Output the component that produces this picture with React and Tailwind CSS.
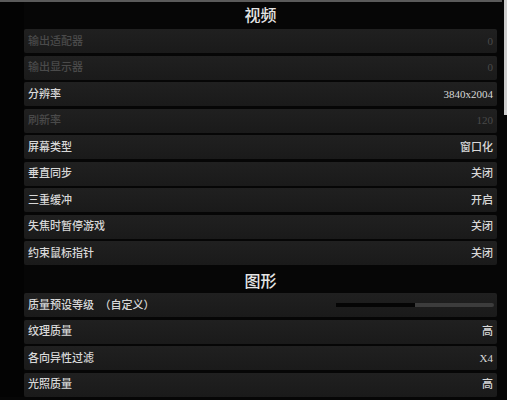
const FONT = {
  fontFamily: '"Liberation Serif", "Noto Sans CJK SC", serif',
};

const videoRows = [
  { label: "输出适配器", value: "0", disabled: true },
  { label: "输出显示器", value: "0", disabled: true },
  { label: "分辨率", value: "3840x2004" },
  { label: "刷新率", value: "120", disabled: true },
  { label: "屏幕类型", value: "窗口化" },
  { label: "垂直同步", value: "关闭" },
  { label: "三重缓冲", value: "开启" },
  { label: "失焦时暂停游戏", value: "关闭" },
  { label: "约束鼠标指针", value: "关闭" },
];

const graphicsRows = [
  { label: "纹理质量", value: "高" },
  { label: "各向异性过滤", value: "X4" },
  { label: "光照质量", value: "高" },
];

function Row({ label, value, disabled, children }) {
  const tone = disabled ? "text-[#4a4a4a]" : "text-[#d8d8d8]";
  return (
    <div className="flex h-[24px] shrink-0 items-center justify-between rounded-[2px] bg-gradient-to-b from-[#202020] to-[#1a1a1a] pl-[4px] pr-[4px]">
      <span className={`text-[11px] font-medium leading-none ${tone}`}>
        {label}
      </span>
      {children ?? (
        <span className={`text-[11px] font-medium leading-none ${tone}`}>
          {value}
        </span>
      )}
    </div>
  );
}

function SectionTitle({ children, className = "" }) {
  return (
    <div
      className={`flex items-center justify-center text-[16px] font-medium leading-none text-[#e4e4e4] ${className}`}
    >
      {children}
    </div>
  );
}

export default function App() {
  return (
    <div
      className="relative h-[400px] w-[507px] overflow-hidden bg-[#060606]"
      style={FONT}
    >
      <div className="h-[2px] w-[502px] bg-[#5a5a5a]" />
      <div className="flex">
        <div className="w-[24px] shrink-0 bg-[#030303]" />
        <div className="flex w-[473px] flex-col gap-[2.5px]">
          <SectionTitle className="h-[24.5px] pt-[4px]">视频</SectionTitle>
          {videoRows.map((r) => (
            <Row key={r.label} {...r} />
          ))}
          <SectionTitle className="h-[23px] pt-[5px]">图形</SectionTitle>
          <Row label="质量预设等级　（自定义）">
            <div className="mr-[-1px] flex h-[4px] w-[158px] overflow-hidden rounded-r-[2px] bg-[#3c3c3c]">
              <div className="h-full w-[79px] bg-[#050505]" />
            </div>
          </Row>
          {graphicsRows.map((r) => (
            <Row key={r.label} {...r} />
          ))}
        </div>
      </div>
      <div className="absolute right-0 top-0 h-[115px] w-[3px] bg-[#cfcfcf]" />
    </div>
  );
}
